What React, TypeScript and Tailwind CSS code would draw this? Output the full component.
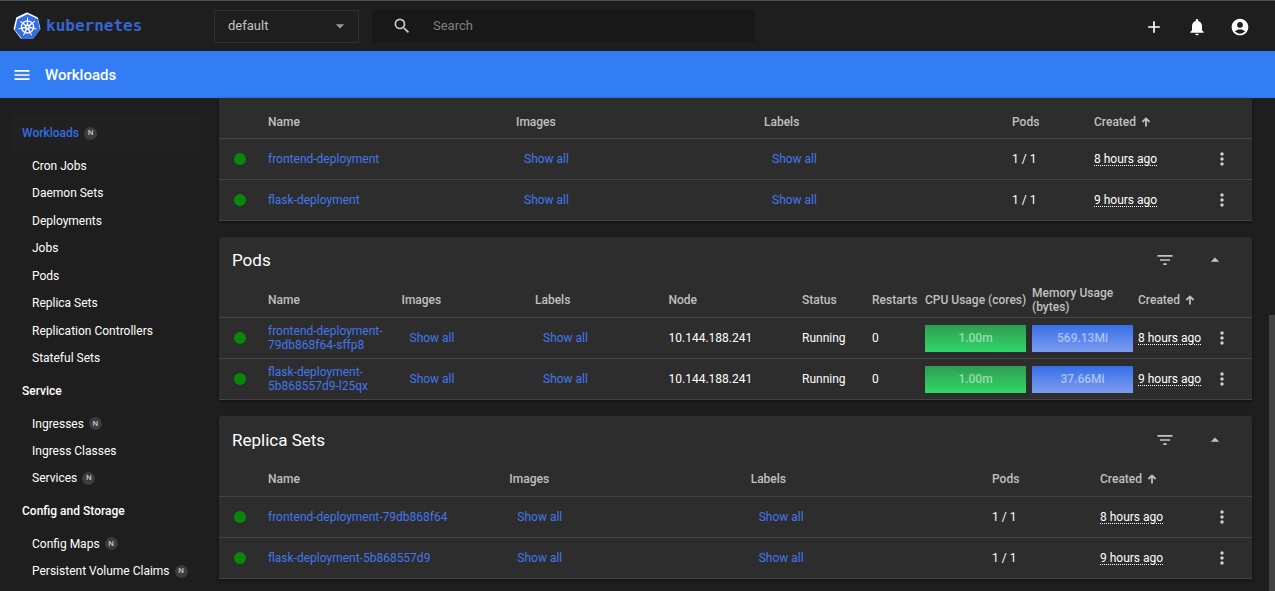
import React from "react";
import {
  MdAccountCircle,
  MdAdd,
  MdArrowDropDown,
  MdArrowDropUp,
  MdFilterList,
  MdMenu,
  MdMoreVert,
  MdNotifications,
  MdSearch,
} from "react-icons/md";
import { SiKubernetes } from "react-icons/si";

type NavItem = { label: string; badge?: boolean };

const workloads: NavItem[] = [
  { label: "Cron Jobs" },
  { label: "Daemon Sets" },
  { label: "Deployments" },
  { label: "Jobs" },
  { label: "Pods" },
  { label: "Replica Sets" },
  { label: "Replication Controllers" },
  { label: "Stateful Sets" },
];

const services: NavItem[] = [
  { label: "Ingresses", badge: true },
  { label: "Ingress Classes" },
  { label: "Services", badge: true },
];

const config: NavItem[] = [
  { label: "Config Maps", badge: true },
  { label: "Persistent Volume Claims", badge: true },
];

function Badge() {
  return (
    <span className="flex size-[13px] items-center justify-center rounded-full bg-[#3c3c3c] text-[8px] font-medium text-[#c4c4c4]">
      N
    </span>
  );
}

function NavList({ items, className }: { items: NavItem[]; className: string }) {
  return (
    <ul className={`grid auto-rows-fr pl-5 ${className}`}>
      {items.map((item) => (
        <li key={item.label} className="flex items-center">
          <a href="#" className="flex items-center gap-[5px] whitespace-nowrap">
            {item.label}
            {item.badge && <Badge />}
          </a>
        </li>
      ))}
    </ul>
  );
}

function Sidebar() {
  return (
    <nav aria-label="Resources" className="w-[219px] shrink-0 overflow-hidden px-3 pt-4 text-[12px] leading-4 text-white">
      <a
        href="#"
        className="mr-2 flex h-[38px] items-center gap-[5px] bg-[#212121] pl-[10px] font-medium text-[#326de6]"
      >
        Workloads
        <Badge />
      </a>
      <NavList items={workloads} className="h-[220px]" />
      <a href="#" className="flex h-[38px] items-center pl-[10px] font-medium">
        Service
      </a>
      <NavList items={services} className="h-[82px]" />
      <a href="#" className="flex h-[38px] items-center pl-[10px] font-medium">
        Config and Storage
      </a>
      <NavList items={config} className="h-[55px]" />
    </nav>
  );
}

function Card({ title, children }: { title?: string; children: React.ReactNode }) {
  return (
    <section className={`bg-[#2d2d2d] shadow-[0_1px_3px_rgba(0,0,0,0.5)] ${title ? "rounded-t-[3px]" : ""}`}>
      {title && (
        <div className="flex h-[46px] items-center pl-[13px] pr-[27px] pt-px">
          <h2 className="flex-1 text-[17px] leading-6 text-white">{title}</h2>
          <button type="button" aria-label={`Filter ${title}`} className="text-[#c4c4c4]">
            <MdFilterList size={20} />
          </button>
          <button type="button" aria-label={`Collapse ${title}`} className="ml-[30px] text-[#c4c4c4]">
            <MdArrowDropUp size={20} />
          </button>
        </div>
      )}
      {children}
    </section>
  );
}

function Th({ children }: { children?: React.ReactNode }) {
  return <th className="p-0 text-left align-middle font-medium text-[#c0c0c0]">{children}</th>;
}

function CreatedTh() {
  return (
    <Th>
      <span className="flex items-center gap-1">
        Created
        <svg viewBox="0 0 12 12" className="size-3" fill="none" stroke="currentColor" strokeWidth="1.8">
          <path d="M6 10.5V2.5M2.4 6L6 2.4L9.6 6" />
        </svg>
      </span>
    </Th>
  );
}

function StatusCell() {
  return (
    <td className="p-0 pl-[15px]">
      <span className="block size-3 rounded-full bg-[#0a870a]" />
    </td>
  );
}

function NameCell({ name }: { name: string }) {
  return (
    <td className="p-0">
      <a href="#" className="block text-[#4277ee]">
        {name}
      </a>
    </td>
  );
}

function ShowAll() {
  return (
    <td className="p-0">
      <button type="button" className="block px-2 text-[#4277ee]">
        Show all
      </button>
    </td>
  );
}

function Text({ children }: { children: React.ReactNode }) {
  return <td className="p-0 text-white">{children}</td>;
}

function Age({ value }: { value: string }) {
  return (
    <td className="whitespace-nowrap p-0 text-white">
      <span className="underline decoration-dotted decoration-1 underline-offset-2">{value}</span>
    </td>
  );
}

function MenuCell() {
  return (
    <td className="p-0">
      <button type="button" aria-label="Actions" className="block text-[#d0d0d0]">
        <MdMoreVert size={20} />
      </button>
    </td>
  );
}

const tableClass = "w-full table-fixed border-collapse text-[12px] leading-[14px]";
const rowClass = "h-[41px] border-b border-[#454545]";

type SetRow = { name: string; age: string };

function SetTable({
  rows,
  podsCol,
  createdCol,
  headClass,
}: {
  rows: SetRow[];
  podsCol: string;
  createdCol: string;
  headClass: string;
}) {
  return (
    <table className={tableClass}>
      <colgroup>
        <col className="w-[49px]" />
        <col />
        <col />
        <col />
        <col className={podsCol} />
        <col className={createdCol} />
        <col className="w-10" />
      </colgroup>
      <thead>
        <tr className={`border-b border-[#454545] ${headClass}`}>
          <Th />
          <Th>Name</Th>
          <Th>Images</Th>
          <Th>Labels</Th>
          <Th>Pods</Th>
          <CreatedTh />
          <Th />
        </tr>
      </thead>
      <tbody>
        {rows.map((r) => (
          <tr key={r.name} className={rowClass}>
            <StatusCell />
            <NameCell name={r.name} />
            <ShowAll />
            <ShowAll />
            <Text>1 / 1</Text>
            <Age value={r.age} />
            <MenuCell />
          </tr>
        ))}
      </tbody>
    </table>
  );
}

const pods = [
  { name: "frontend-deployment-79db868f64-sffp8", mem: "569.13Mi", age: "8 hours ago" },
  { name: "flask-deployment-5b868557d9-l25qx", mem: "37.66Mi", age: "9 hours ago" },
];

function PodsTable() {
  return (
    <table className={tableClass}>
      <colgroup>
        <col className="w-[49px]" />
        <col />
        <col />
        <col />
        <col />
        <col className="w-[70px]" />
        <col className="w-[53px]" />
        <col className="w-[107px]" />
        <col className="w-[106px]" />
        <col className="w-[74px]" />
        <col className="w-10" />
      </colgroup>
      <thead>
        <tr className="h-[35px] border-b border-[#454545]">
          <Th />
          <Th>Name</Th>
          <Th>Images</Th>
          <Th>Labels</Th>
          <Th>Node</Th>
          <Th>Status</Th>
          <Th>Restarts</Th>
          <Th>CPU Usage (cores)</Th>
          <Th>Memory Usage (bytes)</Th>
          <CreatedTh />
          <Th />
        </tr>
      </thead>
      <tbody>
        {pods.map((p) => (
          <tr key={p.name} className={rowClass}>
            <StatusCell />
            <NameCell name={p.name} />
            <ShowAll />
            <ShowAll />
            <Text>10.144.188.241</Text>
            <Text>Running</Text>
            <Text>0</Text>
            <td className="p-0">
              <div className="flex h-[27px] w-[101px] items-center justify-center bg-linear-to-b from-[#2f9d50] to-[#2ed869] font-medium text-white/50">
                1.00m
              </div>
            </td>
            <td className="p-0">
              <div className="flex h-[27px] w-[101px] items-center justify-center bg-linear-to-b from-[#366ee8] to-[#7c9cec] font-medium text-white/50">
                {p.mem}
              </div>
            </td>
            <Age value={p.age} />
            <MenuCell />
          </tr>
        ))}
      </tbody>
    </table>
  );
}

function Logo() {
  return (
    <a href="#" aria-label="kubernetes" className="flex w-[200px] shrink-0 items-center gap-[5px]">
      <span className="relative flex size-7 items-center justify-center">
        <svg viewBox="0 0 28 28" className="absolute inset-0 size-7">
          <path
            d="M14 1.2 L24 6 L26.6 16.8 L19.8 25.8 H8.2 L1.4 16.8 L4 6 Z"
            fill="#fff"
            stroke="#fff"
            strokeWidth="1.6"
            strokeLinejoin="round"
          />
        </svg>
        <SiKubernetes size={25} className="relative text-[#326de6]" />
      </span>
      <span className="font-['DejaVu_Sans_Mono',monospace] text-[16px] font-bold leading-5 text-[#3565cf]">kubernetes</span>
    </a>
  );
}

export default function App() {
  return (
    <div className="flex h-screen flex-col overflow-hidden bg-[#1e1e1e] font-[Roboto,sans-serif]">
      <header className="flex h-[51px] shrink-0 items-center border-t border-[#46555a] pl-[13px] pr-[25px]">
        <Logo />
        <div className="relative ml-px flex h-[33px] w-[145px] shrink-0 items-center border border-[#303030]">
          <select
            aria-label="Namespace"
            className="h-full w-full appearance-none bg-transparent pl-[13px] text-[13px] text-[#c4c4c4]"
          >
            <option>default</option>
          </select>
          <MdArrowDropDown size={20} className="pointer-events-none absolute right-2 text-[#9c9c9c]" />
        </div>
        <label className="ml-[13px] flex h-8 w-[383px] items-center bg-[#181818] pl-5">
          <MdSearch size={20} className="shrink-0 text-[#c8c8c8]" />
          <input
            type="text"
            placeholder="Search"
            aria-label="Search"
            className="ml-[21px] min-w-0 flex-1 bg-transparent text-[13px] text-white outline-none placeholder:text-[#808080]"
          />
        </label>
        <div className="ml-auto flex items-center gap-[23px] pt-px text-white">
          <button type="button" aria-label="Create">
            <MdAdd size={20} />
          </button>
          <button type="button" aria-label="Notifications">
            <MdNotifications size={20} />
          </button>
          <button type="button" aria-label="Account">
            <MdAccountCircle size={20} />
          </button>
        </div>
      </header>

      <div className="flex h-[47px] shrink-0 items-center gap-[13px] bg-[#327df4] pl-3 text-white">
        <button type="button" aria-label="Toggle menu">
          <MdMenu size={20} />
        </button>
        <h1 className="text-[15px] font-medium leading-5">Workloads</h1>
      </div>

      <div className="flex min-h-0 flex-1">
        <Sidebar />
        <main className="flex min-w-0 flex-1 flex-col gap-4">
          <Card>
            <SetTable
              rows={[
                { name: "frontend-deployment", age: "8 hours ago" },
                { name: "flask-deployment", age: "9 hours ago" },
              ]}
              podsCol="w-[82px]"
              createdCol="w-[118px]"
              headClass="h-10 [&>th]:pt-2"
            />
          </Card>
          <Card title="Pods">
            <PodsTable />
          </Card>
          <Card title="Replica Sets">
            <SetTable
              rows={[
                { name: "frontend-deployment-79db868f64", age: "8 hours ago" },
                { name: "flask-deployment-5b868557d9", age: "9 hours ago" },
              ]}
              podsCol="w-[108px]"
              createdCol="w-[112px]"
              headClass="h-[34px]"
            />
          </Card>
        </main>
        <div className="flex w-[23px] shrink-0 flex-col items-end justify-end">
          <div className="h-[56%] w-[6px] bg-[#424242]" />
        </div>
      </div>
    </div>
  );
}
